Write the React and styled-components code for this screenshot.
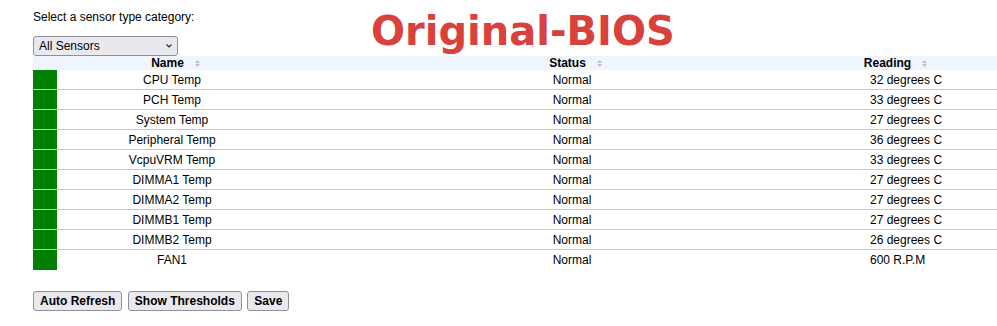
import React from "react";
import styled, { createGlobalStyle } from "styled-components";

const Global = createGlobalStyle`
  html, body { margin: 0; padding: 0; background: #ffffff; }
  body {
    font-family: "Liberation Sans", Arial, sans-serif;
    font-size: 12px;
    color: #000;
  }
`;

const Page = styled.div`
  position: relative;
  padding: 10px 0 0 33px;
`;

const Watermark = styled.div`
  position: absolute;
  left: 371px;
  top: 8px;
  font-family: "DejaVu Sans", Verdana, sans-serif;
  font-weight: bold;
  font-size: 40px;
  line-height: normal;
  color: #d8413c;
  white-space: nowrap;
  pointer-events: none;
`;

const Prompt = styled.div`
  line-height: 14px;
  height: 14px;
`;

const SelectWrap = styled.div`
  position: relative;
  width: 145px;
  height: 20px;
  margin-top: 12px;
`;

const Select = styled.select`
  appearance: none;
  -webkit-appearance: none;
  box-sizing: border-box;
  width: 145px;
  height: 20px;
  margin: 0;
  padding: 0 0 0 5px;
  border: 1px solid #8f8f9d;
  border-radius: 3px;
  background: #e9e9ed;
  font-family: "Liberation Sans", Arial, sans-serif;
  font-size: 12px;
  color: #000;
  line-height: 18px;
`;

const Chevron = styled.svg`
  position: absolute;
  left: 133px;
  top: 8px;
  pointer-events: none;
`;

const Table = styled.table`
  border-collapse: collapse;
  border-spacing: 0;
  table-layout: fixed;
  width: 964px;
`;

const HeadRow = styled.tr`
  background: #eff4fd;
`;

const Th = styled.th`
  height: 14px;
  padding: 0 9px 0 0;
  line-height: 14px;
  font-weight: bold;
  font-size: 12px;
  text-align: center;
  white-space: nowrap;
`;

const Label = styled.span`
  position: relative;
`;

const SortIcon = styled.svg`
  position: absolute;
  right: -16px;
  top: 4px;
`;

const Row = styled.tr`
  border-bottom: 1px solid ${(p) => (p.$last ? "transparent" : "#c8c8c8")};
`;

const StateCell = styled.td`
  height: 19px;
  padding: 0;
  background: #008000;
`;

const Td = styled.td`
  height: 19px;
  padding: 0;
  line-height: 14px;
  vertical-align: middle;
  text-align: ${(p) => p.$align || "center"};
  padding-left: ${(p) => p.$pad || 0}px;
  white-space: nowrap;
  overflow: visible;
`;

const Buttons = styled.div`
  display: flex;
  gap: 5.5px;
  margin-top: 21px;
`;

const Button = styled.button`
  box-sizing: border-box;
  height: 20px;
  margin: 0;
  padding: 0 6px;
  border: 1px solid #8f8f9d;
  border-radius: 3px;
  background: #e9e9ed;
  font-family: "Liberation Sans", Arial, sans-serif;
  font-size: 12px;
  font-weight: bold;
  color: #000;
  line-height: 18px;
  white-space: nowrap;
`;

const sensors = [
  ["CPU Temp", "32 degrees C"],
  ["PCH Temp", "33 degrees C"],
  ["System Temp", "27 degrees C"],
  ["Peripheral Temp", "36 degrees C"],
  ["VcpuVRM Temp", "33 degrees C"],
  ["DIMMA1 Temp", "27 degrees C"],
  ["DIMMA2 Temp", "27 degrees C"],
  ["DIMMB1 Temp", "27 degrees C"],
  ["DIMMB2 Temp", "26 degrees C"],
  ["FAN1", "600 R.P.M"],
];

const Sort = () => (
  <SortIcon width="5" height="7" viewBox="0 0 5 7">
    <path d="M2.5 0 L5 3 L0 3 Z" fill="#c0c0c0" />
    <path d="M0 4 L5 4 L2.5 7 Z" fill="#c0c0c0" />
  </SortIcon>
);

const Header = ({ children }) => (
  <Th>
    <Label>
      {children}
      <Sort />
    </Label>
  </Th>
);

export default function App() {
  return (
    <>
      <Global />
      <Page>
        <Watermark>Original-BIOS</Watermark>
        <Prompt>Select a sensor type category:</Prompt>
        <SelectWrap>
          <Select defaultValue="all">
            <option value="all">All Sensors</option>
            <option value="temp">Temperature</option>
            <option value="fan">Fan</option>
            <option value="volt">Voltage</option>
          </Select>
          <Chevron width="6" height="4" viewBox="0 0 6 4">
            <path d="M0.5 0.5 L3 3 L5.5 0.5" fill="none" stroke="#222" strokeWidth="1.1" />
          </Chevron>
        </SelectWrap>
        <Table>
          <colgroup>
            <col style={{ width: 24 }} />
            <col style={{ width: 230 }} />
            <col style={{ width: 570 }} />
            <col style={{ width: 70 }} />
            <col />
          </colgroup>
          <thead>
            <HeadRow>
              <Th />
              <Header>Name</Header>
              <Header>Status</Header>
              <Header>Reading</Header>
              <Th />
            </HeadRow>
          </thead>
          <tbody>
            {sensors.map(([name, reading], i) => (
              <Row key={name} $last={i === sensors.length - 1}>
                <StateCell />
                <Td>{name}</Td>
                <Td>Normal</Td>
                <Td $align="left" $pad={13}>{reading}</Td>
                <Td />
              </Row>
            ))}
          </tbody>
        </Table>
        <Buttons>
          <Button>Auto Refresh</Button>
          <Button>Show Thresholds</Button>
          <Button>Save</Button>
        </Buttons>
      </Page>
    </>
  );
}
